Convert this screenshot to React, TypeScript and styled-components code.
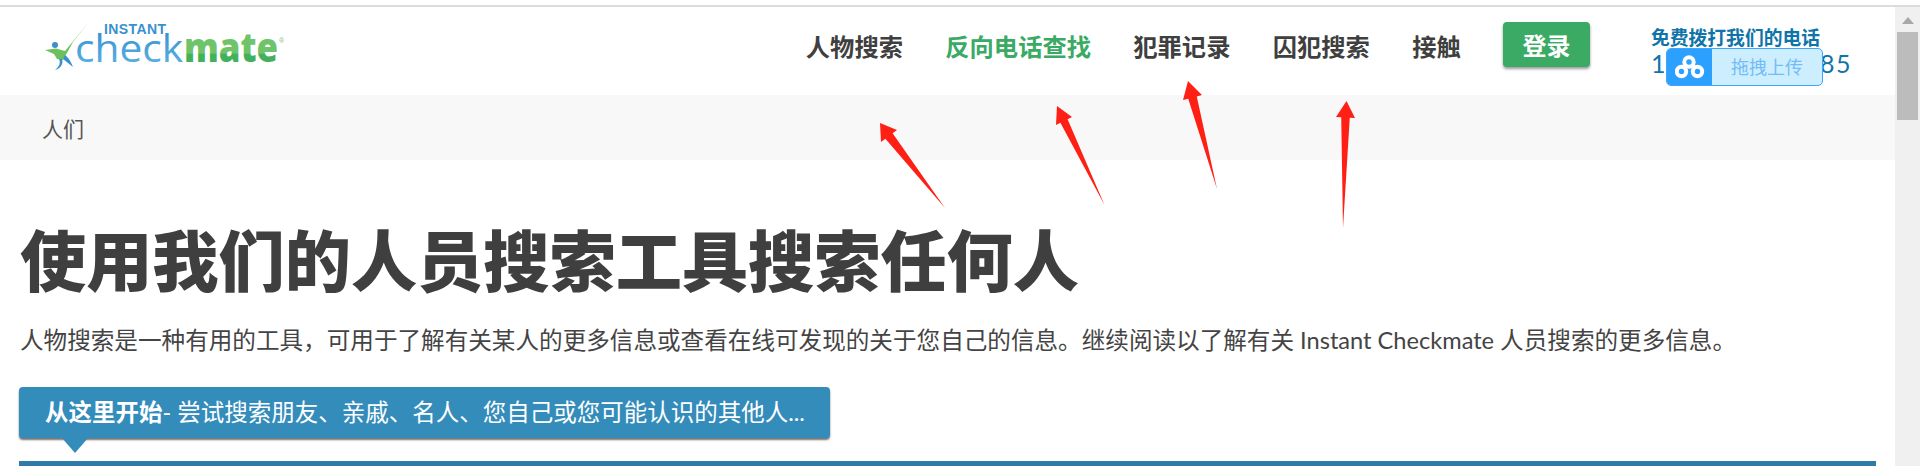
import React from "react";
import styled, { createGlobalStyle } from "styled-components";

const GlobalStyle = createGlobalStyle`
  html, body {
    margin: 0;
    padding: 0;
    height: 466px;
    overflow: hidden;
    background: #fff;
    font-family: Lato, "Noto Sans CJK SC", sans-serif;
  }
`;

const Screen = styled.div`
  position: relative;
  height: 466px;
  overflow: hidden;
  padding-top: 5px;
  box-sizing: border-box;
`;

const TopRule = styled.div`
  height: 2px;
  background: #dcdcdc;
`;

const Columns = styled.div`
  display: flex;
  height: 459px;
`;

const Page = styled.main`
  flex: 1;
  min-width: 0;
`;

const Header = styled.header`
  display: flex;
  align-items: center;
  height: 88px;
  padding: 0 43px 0 45px;
`;

const LogoMark = styled.svg`
  margin-top: -10px;
  overflow: visible;
`;

const Nav = styled.nav`
  display: flex;
  align-items: center;
  gap: 42.25px;
  margin-left: auto;
`;

const NavLink = styled.a<{ $active?: boolean }>`
  font-size: 24.3px;
  font-weight: 700;
  line-height: 30px;
  margin-top: -9px;
  color: ${(p) => (p.$active ? "#3aaa64" : "#3f3f3f")};
`;

const LoginButton = styled.button`
  width: 87px;
  height: 45px;
  margin-top: -13px;
  border: 0;
  border-radius: 4px;
  background: #3aaa64;
  box-shadow: 0 2px 3px rgba(0, 0, 0, 0.4);
  color: #fff;
  font: 700 24px Lato, "Noto Sans CJK SC", sans-serif;
`;

const Phone = styled.div`
  position: relative;
  width: 201px;
  margin-left: 61px;
  margin-top: 2px;
  color: #0f74a8;
`;

const PhoneLabel = styled.div`
  font-size: 18.8px;
  font-weight: 700;
  line-height: 22px;
  white-space: nowrap;
`;

const PhoneNumber = styled.div`
  display: flex;
  justify-content: space-between;
  font-size: 25px;
  line-height: 28px;
  letter-spacing: 1.5px;
`;

const UploadWidget = styled.div`
  position: absolute;
  left: 15px;
  top: 21px;
  display: flex;
  width: 157px;
  height: 38px;
  box-sizing: border-box;
  border: 1px solid #3ea6ff;
  border-radius: 5px;
  overflow: hidden;
  background: #cdeeff;
`;

const UploadIcon = styled.div`
  display: flex;
  align-items: center;
  justify-content: center;
  width: 45px;
  background: #2ba0ff;
`;

const UploadLabel = styled.div`
  flex: 1;
  text-align: center;
  font-size: 18px;
  line-height: 36px;
  color: #73bdf5;
`;

const Breadcrumb = styled.div`
  height: 65px;
  padding-left: 42px;
  background: #f8f8f8;
  font-size: 21px;
  line-height: 68px;
  color: #555;
`;

const Content = styled.section`
  padding: 56px 19px 0 20px;
`;

const Title = styled.h1`
  margin: 0;
  font-size: 66.2px;
  font-weight: 900;
  line-height: 90px;
  color: #3f3f3f;
`;

const Intro = styled.p`
  margin: 17px 0 0;
  font-size: 23.6px;
  line-height: 34px;
  color: #444;
  white-space: nowrap;
`;

const Callout = styled.div`
  position: relative;
  box-sizing: border-box;
  width: 811px;
  height: 51px;
  margin: 30px 0 0 -1px;
  padding-left: 26px;
  border-radius: 4px;
  background: #348cbb;
  box-shadow: 0 2px 2px rgba(0, 0, 0, 0.55);
  color: #fff;
  font-size: 23.5px;
  line-height: 50px;
  white-space: nowrap;

  strong {
    font-weight: 700;
  }

  &::after {
    content: "";
    position: absolute;
    left: 43px;
    top: 100%;
    border-style: solid;
    border-width: 15px 13px 0;
    border-color: #348cbb transparent transparent;
  }
`;

const SearchBar = styled.div`
  height: 6px;
  margin: 23px 0 0 -1px;
  background: #2d7ba6;
`;

const Scrollbar = styled.div`
  position: relative;
  width: 25px;
  background: #f0f0f0;
`;

const ScrollArrow = styled.div`
  position: absolute;
  left: 7px;
  top: 10px;
  border-style: solid;
  border-width: 0 6px 7px;
  border-color: transparent transparent #a8a8a8;
`;

const ScrollThumb = styled.div`
  position: absolute;
  left: 2px;
  top: 25px;
  width: 21px;
  height: 88px;
  background: #bcbcbc;
`;

const Annotations = styled.svg`
  position: absolute;
  left: 0;
  top: 0;
  pointer-events: none;
`;

type Pt = [number, number];

// tail, tip and the two barbs of each hand-drawn arrow
const arrows: { tail: Pt; tip: Pt; a: Pt; b: Pt }[] = [
  { tail: [945, 208], tip: [880, 123], a: [897, 130], b: [881, 142] },
  { tail: [1104.5, 205], tip: [1057, 106], a: [1072, 117], b: [1056, 125] },
  { tail: [1217, 189], tip: [1188, 81], a: [1202, 95], b: [1183, 100] },
  { tail: [1343, 228], tip: [1346.5, 101], a: [1355, 118], b: [1336, 117] },
];

const arrowPoints = ({ tail, tip, a, b }: { tail: Pt; tip: Pt; a: Pt; b: Pt }) => {
  const mid: Pt = [(a[0] + b[0]) / 2, (a[1] + b[1]) / 2];
  const inner = (p: Pt): Pt => [mid[0] + (p[0] - mid[0]) * 0.45, mid[1] + (p[1] - mid[1]) * 0.45];
  return [tip, a, inner(a), tail, inner(b), b].map((p) => p.join(",")).join(" ");
};

const Logo = () => (
  <LogoMark width="245" height="56" viewBox="45 18 245 56">
    <defs>
      <linearGradient id="blue" gradientUnits="userSpaceOnUse" x1="0" y1="33" x2="0" y2="63">
        <stop offset="0" stopColor="#3a94d2" />
        <stop offset="1" stopColor="#58aee0" />
      </linearGradient>
      <linearGradient id="green" gradientUnits="userSpaceOnUse" x1="0" y1="40" x2="0" y2="63">
        <stop offset="0.58" stopColor="#6fc469" />
        <stop offset="0.6" stopColor="#43b05c" />
      </linearGradient>
    </defs>
    <polygon points="45,50 56,48.5 65,51 89,22 73,42 63,60 57,59 54,54" fill="#6cc05f" />
    <circle cx="55" cy="45" r="3" fill="#3a8fcf" />
    <path d="M59 59 C61 63 59 67 55 70 C59 69 64 65 62 59 Z" fill="#3a8fcf" />
    <path d="M65 55 C69 58 71 62 73 67 C69 64 66 61 63 59 Z" fill="#3a8fcf" />
    <text x="104" y="34" fontFamily="Liberation Sans, sans-serif" fontSize="14" fontWeight="700" fill="#3a8fcf" textLength="62">
      INSTANT
    </text>
    <text x="75" y="62" fontFamily="Open Sans, sans-serif" fontSize="39" fill="url(#blue)" textLength="108" lengthAdjust="spacingAndGlyphs">
      check
    </text>
    <text x="184" y="62" fontFamily="Open Sans, sans-serif" fontSize="40" fontWeight="800" fill="url(#green)" textLength="94" lengthAdjust="spacingAndGlyphs">
      mate
    </text>
    <text x="279" y="43" fontFamily="Liberation Sans, sans-serif" fontSize="7" fill="#7cc47f">
      ®
    </text>
  </LogoMark>
);

const CloudIcon = () => (
  <svg width="30" height="24" viewBox="0 0 30 24" fill="none" stroke="#fff" strokeWidth="4">
    <circle cx="14" cy="7" r="4.7" />
    <circle cx="6.5" cy="16.5" r="4.7" />
    <circle cx="22.5" cy="16.5" r="4.7" />
  </svg>
);

export default function App() {
  return (
    <>
      <GlobalStyle />
      <Screen>
        <TopRule />
        <Columns>
          <Page>
            <Header>
              <Logo />
              <Nav>
                <NavLink>人物搜索</NavLink>
                <NavLink $active>反向电话查找</NavLink>
                <NavLink>犯罪记录</NavLink>
                <NavLink>囚犯搜索</NavLink>
                <NavLink>接触</NavLink>
                <LoginButton>登录</LoginButton>
              </Nav>
              <Phone>
                <PhoneLabel>免费拨打我们的电话</PhoneLabel>
                <PhoneNumber>
                  <span>1</span>
                  <span>85</span>
                </PhoneNumber>
                <UploadWidget>
                  <UploadIcon>
                    <CloudIcon />
                  </UploadIcon>
                  <UploadLabel>拖拽上传</UploadLabel>
                </UploadWidget>
              </Phone>
            </Header>
            <Breadcrumb>人们</Breadcrumb>
            <Content>
              <Title>使用我们的人员搜索工具搜索任何人</Title>
              <Intro>
                人物搜索是一种有用的工具，可用于了解有关某人的更多信息或查看在线可发现的关于您自己的信息。继续阅读以了解有关 Instant Checkmate 人员搜索的更多信息。
              </Intro>
              <Callout>
                <strong>从这里开始</strong>- 尝试搜索朋友、亲戚、名人、您自己或您可能认识的其他人...
              </Callout>
              <SearchBar />
            </Content>
          </Page>
          <Scrollbar>
            <ScrollArrow />
            <ScrollThumb />
          </Scrollbar>
        </Columns>
        <Annotations width="1920" height="466">
          {arrows.map((arrow) => (
            <polygon key={arrow.tip.join()} points={arrowPoints(arrow)} fill="#ff2015" />
          ))}
        </Annotations>
      </Screen>
    </>
  );
}
